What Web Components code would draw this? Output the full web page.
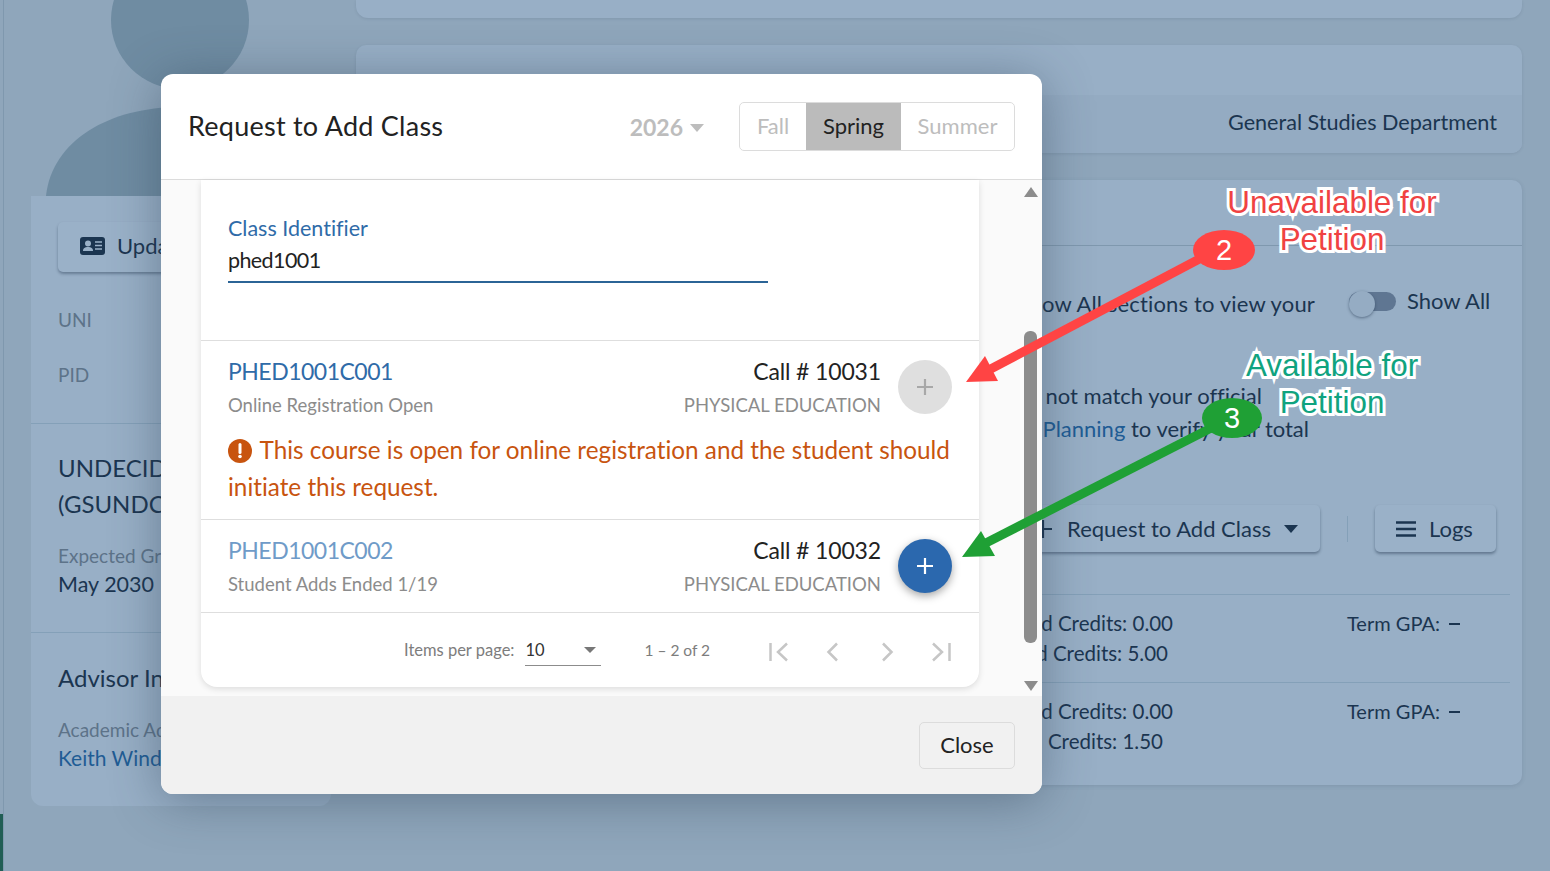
<!DOCTYPE html>
<html>
<head>
<meta charset="utf-8">
<title>Request to Add Class</title>
<style>
    html, body { margin: 0; height: 871px; overflow: hidden; }
    body { font-family: Lato, "Liberation Sans", sans-serif; font-variant-ligatures: none; color: #1b3550; background: #8fa6bb; }
</style>
</head>
<body>
<app-page>
    <profile-side slot="side"></profile-side>
    <plain-card slot="main" style="height:18px;border-radius:0 0 12px 12px"></plain-card>
    <dept-card slot="main"></dept-card>
    <term-card slot="main"></term-card>
</app-page>
<add-class-modal>
    <class-row code="PHED1001C001" status="Online Registration Open" call="10031">
        <warn-note>This course is open for online registration and the student should initiate this request.</warn-note>
    </class-row>
    <class-row code="PHED1001C002" status="Student Adds Ended 1/19" call="10032" open></class-row>
</add-class-modal>
<note-overlay></note-overlay>

<script>
function mount(el, html) {
    el.attachShadow({ mode: 'open' }).innerHTML = html;
}

class AppPage extends HTMLElement {
    constructor() {
        super();
        mount(this, `
        <style>
            :host { display: grid; grid-template-columns: 300px 1166px; column-gap: 25px; padding-left: 31px; height: 871px; box-sizing: border-box; overflow: hidden; position: relative; }
            .main { display: flex; flex-direction: column; gap: 27px; }
            .strip { position: absolute; left: 0; top: 0; bottom: 0; width: 3px; border-right: 1px solid #7f98ae; }
            .strip i { position: absolute; left: 0; right: 0; bottom: 0; height: 57px; background: #215e55; }
        </style>
        <div class="strip"><i></i></div>
        <slot name="side"></slot>
        <div class="main"><slot name="main"></slot></div>`);
    }
}

class PlainCard extends HTMLElement {
    constructor() {
        super();
        mount(this, `<style>:host { display: block; background: #98afc6; box-shadow: 0 1px 3px rgba(40,60,85,.12); }</style><slot></slot>`);
    }
}

class ProfileSide extends HTMLElement {
    constructor() {
        super();
        mount(this, `
        <style>
            :host { display: block; width: 300px; }
            svg { display: block; }
            .card { height: 610px; box-sizing: border-box; background: #98afc6; border-radius: 0 0 12px 12px; }
            .btn { display: flex; align-items: center; gap: 12px; width: 240px; height: 50px; margin-left: 27px; box-sizing: border-box; padding: 0 0 3px 22px; border-radius: 5px; background: #9ab1c8; box-shadow: 0 2px 3px rgba(30,50,75,.4); font-size: 22px; }
            .top { height: 228px; padding-top: 26px; box-sizing: border-box; border-bottom: 1px solid #84a0b8; }
            .lbl { margin: 36px 0 0 27px; font-size: 19px; color: #5d7389; line-height: 24px; }
            .lbl + .lbl { margin-top: 31px; }
            .sec { padding: 26px 27px 0; border-bottom: 1px solid #84a0b8; height: 209px; box-sizing: border-box; }
            .sec.last { border: 0; height: auto; padding-top: 27px; }
            .h { font-size: 24px; line-height: 36px; white-space: nowrap; }
            .k { font-size: 19px; line-height: 24px; color: #5d7389; margin-top: 22px; }
            .v { font-size: 21.500px; line-height: 32px; }
            .last .v { font-size: 21px; }
            a { color: #1f5c94; }
        </style>
        <svg width="300" height="196" viewBox="31 0 300 196">
            <circle cx="180" cy="20" r="69" fill="#6f8ca2"/>
            <path d="M46 196C52 140 110 107 180 107C250 107 306 140 314 196Z" fill="#6f8ca2"/>
        </svg>
        <div class="card">
            <div class="top">
                <div class="btn">
                    <svg width="25" height="18" viewBox="0 0 25 18"><rect width="25" height="18" rx="3" fill="#1b3550"/><circle cx="8" cy="6.5" r="3" fill="#9ab1c8"/><path d="M3 14c0-3 2-4 5-4s5 1 5 4z" fill="#9ab1c8"/><path d="M15 5h7M15 8.500h7M15 12h7" stroke="#9ab1c8" stroke-width="1.500"/></svg>
                    <span>Update Info</span>
                </div>
                <div class="lbl">UNI</div>
                <div class="lbl">PID</div>
            </div>
            <div class="sec">
                <div class="h">UNDECIDED</div>
                <div class="h">(GSUNDCL)</div>
                <div class="k">Expected Graduation</div>
                <div class="v">May 2030</div>
            </div>
            <div class="sec last">
                <div class="h">Advisor Info</div>
                <div class="k" style="margin-top:22px">Academic Advisor</div>
                <div class="v"><a>Keith Windsor</a></div>
            </div>
        </div>`);
    }
}

class DeptCard extends HTMLElement {
    constructor() {
        super();
        mount(this, `
        <style>
            :host { display: block; height: 108px; background: #98afc6; border-radius: 10px; box-shadow: 0 1px 3px rgba(40,60,85,.12); }
            .top { height: 50px; }
            .bot { height: 58px; box-sizing: border-box; padding: 0 25px 4px 0; background: #94abc2; border-radius: 0 0 10px 10px; display: flex; align-items: center; justify-content: flex-end; font-size: 21.600px; }
        </style>
        <div class="top"></div>
        <div class="bot">General Studies Department</div>`);
    }
}

class TermCard extends HTMLElement {
    constructor() {
        super();
        mount(this, `
        <style>
            :host { display: block; height: 605px; background: #98afc6; border-radius: 10px; font-size: 22px; box-shadow: 0 1px 4px rgba(40,60,85,.15); }
            .head { height: 66px; box-sizing: border-box; border-bottom: 1px solid #7f98ae; }
            .grid { display: grid; grid-template-columns: 964px 163px; column-gap: 27px; padding-right: 12px; }
            .l { display: flex; flex-direction: column; align-items: flex-end; white-space: nowrap; }
            .show { padding: 43px 5px 0 0; height: 132px; box-sizing: border-box; line-height: 30px; letter-spacing: .15px; }
            .show2 { display: flex; align-items: center; gap: 11px; padding-top: 40px; height: 30px; line-height: 30px; white-space: nowrap; }
            .tog { width: 47px; height: 19px; margin-left: 2px; border-radius: 10px; background: #5f7692; position: relative; flex: none; }
            .tog i { position: absolute; left: 0; top: -1px; width: 26px; height: 26px; border-radius: 50%; background: #95acc3; box-shadow: 0 1px 3px rgba(30,50,75,.5); }
            .p { height: 33px; line-height: 33px; }
            a { color: #1f5c94; }
            .b { display: flex; align-items: center; height: 47px; box-sizing: border-box; border-radius: 5px; background: #9ab1c8; box-shadow: 0 2px 3px rgba(30,50,75,.45); white-space: nowrap; }
            .req { padding: 0 22px 0 0; width: 400px; justify-content: flex-end; }
            .req svg { margin-right: 15px; }
            .caret { width: 0; height: 0; border: 7px solid transparent; border-top: 8px solid #1b3550; border-bottom: 0; margin-left: 13px; }
            .sep { width: 1px; height: 26px; background: #84a0b8; }
            .log { width: 121px; margin-left: 27px; gap: 13px; padding-left: 21px; }
            .acts { display: flex; align-items: center; height: 47px; }
            .row { height: 88px; font-size: 20.500px; border-top: 1px solid #84a0b8; margin-left: 340px; margin-right: 12px; box-sizing: border-box; padding-top: 13px; display: grid; grid-template-columns: 624px 163px; column-gap: 27px; line-height: 30px; }
            .c { text-align: right; padding-right: 147px; white-space: nowrap; }
            .gpa { white-space: nowrap; font-size: 20px; }
            .gpa span { margin-left: 9px; display: inline-block; width: 11px; height: 2px; background: #1b3550; vertical-align: 6px; }
        </style>
        <div class="head"></div>
        <div class="grid">
            <div class="l show"><div>Select Show All sections to view your</div></div>
            <div class="show2"><span class="tog"><i></i></span><span>Show All</span></div>
        </div>
        <div class="l" style="padding-right:260px;margin-top:1px">
            <div class="p">Some credits here may not match your official</div>
        </div>
        <div class="l" style="padding-right:213px">
            <div class="p">please review with Student <a>Planning</a> to verify your total</div>
        </div>
        <div class="acts" style="margin-top:60px;padding-left:564px">
            <div class="b req">
                <svg width="18" height="18" viewBox="0 0 18 18"><path d="M9 0v18M0 9h18" stroke="#1b3550" stroke-width="2.200"/></svg>
                <span>Request to Add Class</span><span class="caret"></span>
            </div>
            <span class="sep" style="margin-left:27px"></span>
            <div class="b log">
                <svg width="20" height="16" viewBox="0 0 20 16"><path d="M0 1.500h20M0 8h20M0 14.500h20" stroke="#1b3550" stroke-width="2.500"/></svg>
                <span>Logs</span>
            </div>
        </div>
        <div style="height:42px"></div>
        <div class="row">
            <div class="c"><div>Attempted Credits: 0.00</div><div style="padding-right:5px">Earned Credits: 5.00</div></div>
            <div class="gpa">Term GPA:<span></span></div>
        </div>
        <div class="row">
            <div class="c"><div>Attempted Credits: 0.00</div><div style="padding-right:10px">Earned Credits: 1.50</div></div>
            <div class="gpa">Term GPA:<span></span></div>
        </div>`);
    }
}

class SegControl extends HTMLElement {
    constructor() {
        super();
        mount(this, `
        <style>
            :host { display: flex; height: 49px; box-sizing: border-box; border: 1px solid #dcdcdc; border-radius: 5px; font-size: 22px; color: #bdbdbd; overflow: hidden; }
            span { display: flex; align-items: center; justify-content: center; padding-bottom: 2px; }
            .on { background: #bbbbbb; color: #222; }
        </style>
        <span style="width:66px">Fall</span><span class="on" style="width:95px">Spring</span><span style="width:113px">Summer</span>`);
    }
}

class WarnNote extends HTMLElement {
    constructor() {
        super();
        mount(this, `
        <style>
            :host { display: block; color: #c8540f; font-size: 24.300px; line-height: 37px; margin-top: -2px; padding: 0 26px 14px 27px; }
            svg { vertical-align: -4px; margin-right: 2px; }
        </style>
        <svg width="24" height="24" viewBox="0 0 24 24"><circle cx="12" cy="12" r="12" fill="#c8540f"/><path d="M12 5.500v8" stroke="#fff" stroke-width="3" stroke-linecap="round"/><circle cx="12" cy="17.500" r="1.800" fill="#fff"/></svg>
        <slot></slot>`);
    }
}

class ClassRow extends HTMLElement {
    constructor() {
        super();
        const open = this.hasAttribute('open');
        mount(this, `
        <style>
            :host { display: block; border-bottom: 1px solid #dedede; }
            .top { display: grid; grid-template-columns: 1fr auto 54px; column-gap: 17px; padding: 14px 27px 15px; }
            .code { font-size: 23px; letter-spacing: -.5px; line-height: 32px; color: ${open ? '#6f9bc8' : '#2f6ba8'}; }
            .call { font-size: 23px; letter-spacing: -.15px; line-height: 32px; color: #222; text-align: right; }
            .sub { font-size: 18.500px; line-height: 26px; margin-top: 5px; color: #8c8c8c; white-space: nowrap; }
            .r { text-align: right; }
            .add { grid-row: 1 / 3; grid-column: 3; width: 54px; height: 54px; margin-top: 5px; border-radius: 50%; background: ${open ? '#2b68ae' : '#dfdfdf'}; ${open ? 'box-shadow: 0 3px 8px rgba(0,0,0,.35);' : ''} display: flex; align-items: center; justify-content: center; }
        </style>
        <div class="top">
            <div><div class="code">${this.getAttribute('code')}</div><div class="sub">${this.getAttribute('status')}</div></div>
            <div class="r"><div class="call">Call # ${this.getAttribute('call')}</div><div class="sub">PHYSICAL EDUCATION</div></div>
            <div class="add"><svg width="18" height="18" viewBox="0 0 18 18"><path d="M9 1v16M1 9h16" stroke="${open ? '#fff' : '#a8a8a8'}" stroke-width="2.200"/></svg></div>
        </div>
        <slot></slot>`);
    }
}

class PagerBar extends HTMLElement {
    constructor() {
        super();
        const ic = 'fill="none" stroke="#c6c6c6" stroke-width="2.500"';
        mount(this, `
        <style>
            :host { display: flex; align-items: center; height: 74px; padding-left: 203px; box-sizing: border-box; font-size: 16.500px; color: #7d7d7d; white-space: nowrap; }
            .sel { display: flex; align-items: center; justify-content: space-between; width: 76px; height: 31px; margin-left: 11px; padding-right: 5px; box-sizing: border-box; border-bottom: 1px solid #8c8c8c; color: #333; position: relative; top: 0; }
            .sel i { width: 0; height: 0; border: 6px solid transparent; border-top: 6px solid #777; border-bottom: 0; }
            .rng { margin-left: 43px; width: 125px; font-size: 15.500px; }
            .nav { display: flex; gap: 34px; margin-top: 3px; }
            svg { display: block; }
        </style>
        <span>Items per page:</span>
        <div class="sel"><span>10</span><i></i></div>
        <span class="rng">1 – 2 of 2</span>
        <div class="nav">
            <svg width="20" height="20" viewBox="0 0 20 20"><path d="M1.500 1v18M18 1.500 9 10l9 8.500" ${ic}/></svg>
            <svg width="20" height="20" viewBox="0 0 20 20"><path d="M14 1.500 5.500 10l8.500 8.500" ${ic}/></svg>
            <svg width="20" height="20" viewBox="0 0 20 20"><path d="M6 1.500 14.500 10 6 18.500" ${ic}/></svg>
            <svg width="20" height="20" viewBox="0 0 20 20"><path d="M2 1.500 11 10l-9 8.500M18.500 1v18" ${ic}/></svg>
        </div>`);
    }
}

class AddClassModal extends HTMLElement {
    constructor() {
        super();
        mount(this, `
        <style>
            :host { position: absolute; left: 161px; top: 74px; width: 881px; height: 720px; display: flex; flex-direction: column; background: #fff; border-radius: 12px; overflow: hidden; box-shadow: 0 6px 50px rgba(45,65,85,.45); color: #222; }
            .hd { flex: none; height: 106px; box-sizing: border-box; border-bottom: 1px solid #dcdcdc; display: flex; align-items: center; padding: 0 27px; }
            .title { font-size: 27px; letter-spacing: .25px; flex: 1; padding-bottom: 2px; }
            .year { font-size: 23px; font-weight: 700; color: #bdbdbd; display: flex; align-items: center; gap: 7px; margin-right: 35px; }
            .year i { width: 0; height: 0; border: 7px solid transparent; border-top: 8px solid #bdbdbd; border-bottom: 0; margin-top: 2px; }
            .body { flex: none; height: 516px; display: flex; background: #fafafa; }
            .wrap { width: 778px; margin-left: 40px; height: 507px; background: #fff; border-radius: 0 0 16px 16px; box-shadow: 0 2px 6px rgba(0,0,0,.12); }
            .filter { height: 161px; box-sizing: border-box; border-bottom: 1px solid #dedede; padding: 33px 27px 0; }
            label { display: block; font-size: 21.500px; line-height: 30px; color: #2f6ba8; }
            .inp { width: 540px; height: 40px; line-height: 35px; font-size: 21.500px; letter-spacing: -.6px; box-sizing: border-box; border-bottom: 2px solid #2b6496; }
            .bar { width: 13px; margin-left: 45px; display: flex; flex-direction: column; align-items: center; position: relative; }
            .up, .dn { position: absolute; width: 0; height: 0; border: 7px solid transparent; }
            .up { top: 7px; border-bottom: 10px solid #8c8c8c; border-top: 0; }
            .dn { top: 501px; border-top: 10px solid #8c8c8c; border-bottom: 0; }
            .thumb { position: absolute; top: 151px; width: 13px; height: 312px; border-radius: 6px; background: #8c8c8c; }
            .ft { flex: 1; background: #f1f1f1; display: flex; justify-content: flex-end; align-items: flex-start; padding: 26px 27px 0; }
            .close { width: 96px; height: 47px; box-sizing: border-box; border: 1px solid #dcdcdc; border-radius: 5px; padding-bottom: 2px; font-size: 22px; display: flex; align-items: center; justify-content: center; color: #222; }
        </style>
        <div class="hd">
            <div class="title">Request to Add Class</div>
            <div class="year">2026<i></i></div>
            <seg-control></seg-control>
        </div>
        <div class="body">
            <div class="wrap">
                <div class="filter">
                    <label>Class Identifier</label>
                    <div class="inp">phed1001</div>
                </div>
                <slot></slot>
                <pager-bar></pager-bar>
            </div>
            <div class="bar"><i class="up"></i><i class="thumb"></i><i class="dn"></i></div>
        </div>
        <div class="ft"><div class="close">Close</div></div>`);
    }
}

class NoteOverlay extends HTMLElement {
    constructor() {
        super();
        mount(this, `
        <style>
            :host { position: absolute; left: 0; top: 0; width: 1550px; height: 871px; pointer-events: none; }
            svg { position: absolute; left: 0; top: 0; }
            .lab { position: absolute; width: 300px; text-align: center; font-family: "Liberation Sans", sans-serif; font-size: 31.400px; line-height: 37px; -webkit-text-stroke: 6px #fff; paint-order: stroke fill; }
            .red { left: 1182px; top: 184px; color: #f04242; }
            .grn { left: 1182px; top: 347px; color: #10a37f; }
            text { font-family: "Liberation Sans", sans-serif; font-size: 29px; fill: #fff; text-anchor: middle; }
        </style>
        <svg width="1550" height="871" viewBox="0 0 1550 871">
            <path d="M1205 256 985 372" stroke="#ff4444" stroke-width="9"/>
            <path d="M966 382 985 356 998 381Z" fill="#ff4444"/>
            <ellipse cx="1224" cy="250" rx="31" ry="20" fill="#ff4444"/>
            <text x="1224" y="260">2</text>
            <path d="M1215 426 980 546" stroke="#1fa035" stroke-width="9"/>
            <path d="M962 557 981 531 995 556Z" fill="#1fa035"/>
            <ellipse cx="1232" cy="418" rx="30" ry="20" fill="#1fa035"/>
            <text x="1232" y="428">3</text>
        </svg>
        <div class="lab red">Unavailable for<br>Petition</div>
        <div class="lab grn">Available for<br>Petition</div>`);
    }
}

customElements.define('app-page', AppPage);
customElements.define('plain-card', PlainCard);
customElements.define('profile-side', ProfileSide);
customElements.define('dept-card', DeptCard);
customElements.define('term-card', TermCard);
customElements.define('seg-control', SegControl);
customElements.define('warn-note', WarnNote);
customElements.define('class-row', ClassRow);
customElements.define('pager-bar', PagerBar);
customElements.define('add-class-modal', AddClassModal);
customElements.define('note-overlay', NoteOverlay);
</script>
</body>
</html>
